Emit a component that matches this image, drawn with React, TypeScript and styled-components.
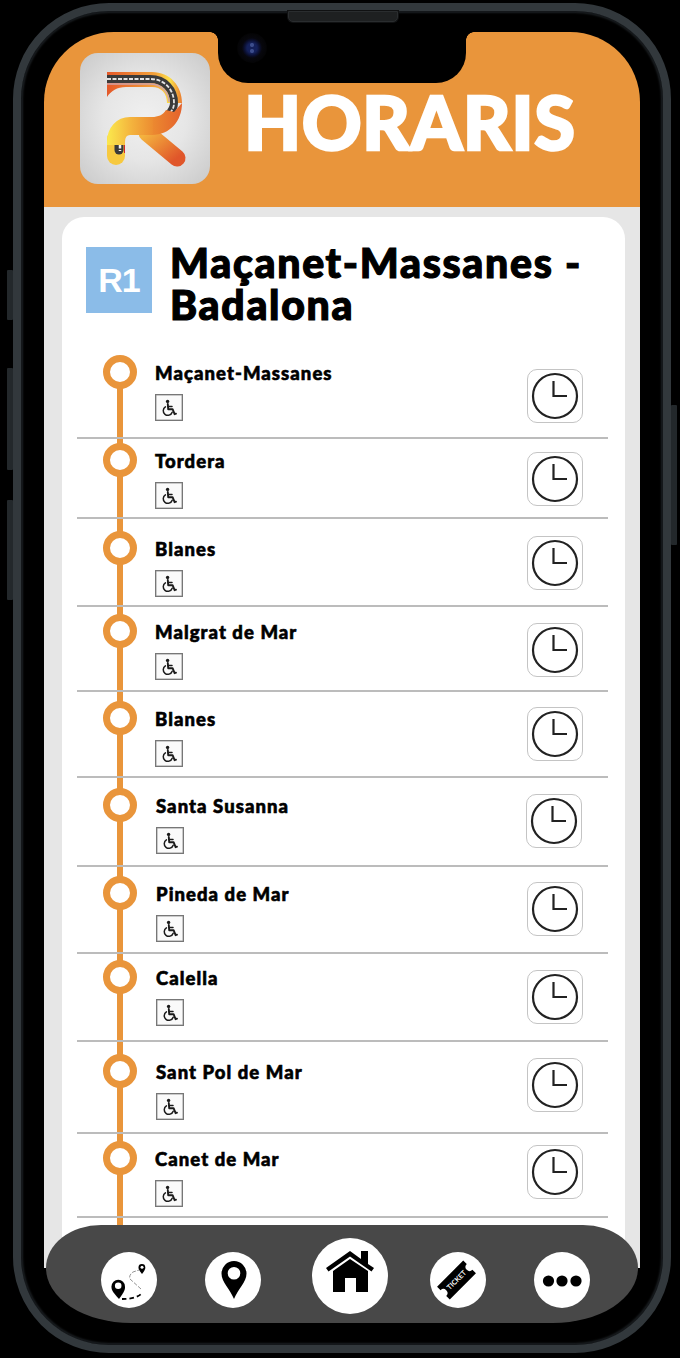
import styled, { createGlobalStyle } from 'styled-components'

const ORANGE = '#e9953b'

const GlobalStyle = createGlobalStyle`
  html, body {
    margin: 0;
    padding: 0;
    background: #000;
  }
  * {
    box-sizing: border-box;
  }
`

const Page = styled.div`
  width: 680px;
  height: 1358px;
  padding: 3px 9px 5px 13px;
  background: #000;
  font-family: Lato, 'Liberation Sans', sans-serif;
  overflow: hidden;
`

const Bezel = styled.div`
  position: relative;
  width: 658px;
  height: 1350px;
  padding: 21px 23px;
  border: 8px solid #32383c;
  border-radius: 96px;
  box-shadow: inset 0 0 0 1px #14171a, inset 0 0 2px 2px #1b1f22;
`

const SideButton = styled.div<{ $top: number; $height: number; $right?: boolean }>`
  position: absolute;
  top: ${({ $top }) => $top}px;
  ${({ $right }) => ($right ? 'right: -14px;' : 'left: -14px;')}
  width: 6px;
  height: ${({ $height }) => $height}px;
  background: #23282b;
  border-radius: 1px;
`

const Speaker = styled.div`
  position: absolute;
  top: 0;
  left: 267px;
  width: 110px;
  height: 11px;
  background: #1e2021;
  border: 1px solid #2a2d2f;
  border-radius: 0 0 5px 5px;
  box-shadow: 0 0 0 1px #101112;
`

const Screen = styled.div`
  position: relative;
  display: flex;
  flex-direction: column;
  width: 596px;
  height: 1236px;
`

const Notch = styled.div`
  position: absolute;
  top: 0;
  left: 174px;
  width: 248px;
  height: 51px;
  background: #000;
  border-radius: 0 0 30px 30px;
  z-index: 2;
  &::before,
  &::after {
    content: '';
    position: absolute;
    top: 0;
    width: 8px;
    height: 8px;
  }
  &::before {
    left: -8px;
    background: radial-gradient(circle at 0 100%, transparent 7.5px, #000 8px);
  }
  &::after {
    right: -8px;
    background: radial-gradient(circle at 100% 100%, transparent 7.5px, #000 8px);
  }
`

const Camera = styled.div`
  position: absolute;
  top: 1px;
  left: 19px;
  width: 30px;
  height: 30px;
  border-radius: 50%;
  background:
    radial-gradient(circle at 50% 40%, #3c4d8c 0 1.5px, transparent 2.5px),
    radial-gradient(circle at 50% 60%, #3c4d8c 0 1.5px, transparent 2.5px),
    radial-gradient(circle, #14205a 0 5px, #0a0e2c 8px, #07070d 10px, #040405 15px);
`

const Header = styled.header`
  display: flex;
  flex: 0 0 175px;
  align-items: flex-start;
  gap: 34px;
  padding: 21px 0 0 36px;
  background: ${ORANGE};
  border-radius: 70px 70px 0 0;
`

const LogoTile = styled.div`
  width: 130px;
  height: 131px;
  border-radius: 18px;
  background: radial-gradient(circle at 50% 50%, #f0f0f0 0%, #e6e6e6 45%, #c9c9c9 100%);
`

const AppTitle = styled.h1`
  margin: 31px 0 0;
  color: #fff;
  font-size: 74px;
  font-weight: 900;
  line-height: 75px;
  letter-spacing: 0.4px;
  -webkit-text-stroke: 2.4px #fff;
`

const Content = styled.main`
  display: flex;
  flex: 1;
  min-height: 0;
  padding: 10px 15px 0 18px;
  background: #e6e6e6;
  overflow: hidden;
`

const Card = styled.section`
  flex: 1;
  padding: 30px 17px 0 15px;
  background: #fff;
  border-radius: 22px 22px 0 0;
`

const LineHeading = styled.div`
  display: flex;
  align-items: flex-start;
  gap: 18px;
  height: 103px;
  padding-left: 9px;
`

const LineBadge = styled.div`
  display: flex;
  flex: 0 0 66px;
  align-items: center;
  justify-content: center;
  height: 66px;
  background: #8bbce8;
  color: #fff;
  font-family: 'Liberation Sans', Arial, sans-serif;
  font-size: 34px;
  font-weight: 700;
  letter-spacing: -1px;
`

const LineName = styled.h2`
  margin: -5px 0 0;
  color: #000;
  font-size: 41px;
  font-weight: 900;
  line-height: 42px;
  letter-spacing: 1.7px;
  -webkit-text-stroke: 1.2px #000;
`

const StopList = styled.div`
  position: relative;
`

const Rail = styled.div`
  position: absolute;
  top: 22px;
  bottom: 0;
  left: 39.5px;
  width: 6px;
  background: ${ORANGE};
`

const StopRow = styled.div<{ $height: number }>`
  position: relative;
  display: flex;
  align-items: flex-start;
  height: ${({ $height }) => $height}px;
  padding: 0 25px 0 26px;
  border-bottom: 2px solid #bcbcbc;
`

const StopMarker = styled.div<{ $top: number }>`
  flex: 0 0 34px;
  height: 34px;
  margin-top: ${({ $top }) => $top}px;
  background: #fff;
  border: 7px solid ${ORANGE};
  border-radius: 50%;
`

const StopInfo = styled.div<{ $top: number; $nudge: number }>`
  flex: 1;
  margin: ${({ $top }) => $top + 8}px 0 0 ${({ $nudge }) => 18 + $nudge}px;
`

const StopName = styled.div`
  color: #000;
  font-size: 18.5px;
  font-weight: 900;
  line-height: 20px;
  letter-spacing: 1.05px;
  -webkit-text-stroke: 0.6px #000;
`

const AccessBadge = styled.div`
  display: flex;
  align-items: center;
  justify-content: center;
  width: 28px;
  height: 27px;
  margin-top: 11px;
  background: #fafafa;
  border: 1px solid #777;
  box-shadow: inset 0 0 0 0.5px #999;
`

const ClockButton = styled.div<{ $top: number; $nudge: number }>`
  display: flex;
  flex: 0 0 56px;
  align-items: center;
  justify-content: center;
  height: 54px;
  margin: ${({ $top }) => $top}px ${({ $nudge }) => $nudge}px 0 0;
  background: #fff;
  border: 1px solid #c4c4c4;
  border-radius: 10px;
`

const BottomNav = styled.nav`
  position: absolute;
  right: 2px;
  bottom: -55px;
  left: 2px;
  display: flex;
  align-items: center;
  gap: 48px;
  height: 98px;
  padding: 12px 0 0 55px;
  background: #484848;
  border-radius: 55px 55px 85px 85px / 43px 43px 55px 55px;
`

const NavButton = styled.div<{ $big?: boolean }>`
  display: flex;
  align-items: center;
  justify-content: center;
  flex: 0 0 auto;
  width: ${({ $big }) => ($big ? 76 : 56)}px;
  height: ${({ $big }) => ($big ? 76 : 56)}px;
  margin: ${({ $big }) => ($big ? '-8px -6px 0 3px' : '0')};
  background: #fff;
  border-radius: 50%;
`

const RLogo = () => (
  <svg width="130" height="131" viewBox="0 0 130 131" fill="none">
    <defs>
      <linearGradient id="legGrad" x1="0" y1="0" x2="1" y2="1">
        <stop offset="0" stopColor="#f4b23e" />
        <stop offset="1" stopColor="#e0562a" />
      </linearGradient>
      <linearGradient id="bandGrad" x1="27" y1="0" x2="74" y2="0" gradientUnits="userSpaceOnUse">
        <stop offset="0" stopColor="#fbe94d" />
        <stop offset="0.5" stopColor="#f4b53e" />
        <stop offset="1" stopColor="#ec8a30" />
      </linearGradient>
      <linearGradient id="topGrad" x1="27" y1="0" x2="102" y2="0" gradientUnits="userSpaceOnUse">
        <stop offset="0" stopColor="#e4592a" />
        <stop offset="0.65" stopColor="#f3a33a" />
        <stop offset="0.84" stopColor="#fbe04a" />
        <stop offset="1" stopColor="#ea7a2e" />
      </linearGradient>
      <linearGradient id="bowlGrad" x1="72" y1="0" x2="102" y2="0" gradientUnits="userSpaceOnUse">
        <stop offset="0" stopColor="#ec8a30" />
        <stop offset="1" stopColor="#e4622c" />
      </linearGradient>
    </defs>
    <path d="M67 80 L97 105" stroke="url(#legGrad)" strokeWidth="17" strokeLinecap="round" />
    <path d="M36 86 V103" stroke="#f7c93f" strokeWidth="18" strokeLinecap="round" />
    <path d="M39 80 V97" stroke="#3a3a3a" strokeWidth="9" strokeLinecap="round" />
    <path d="M40 82 V98" stroke="#f4f4f4" strokeWidth="2.5" strokeDasharray="6 1.5" />
    <path d="M44.5 84 V100" stroke="#d8262a" strokeWidth="1" />
    <path d="M27 44 V19 H72 C90 19 102 33 102 50 H87 C87 40 81 34 72 34 H46 C37 34 31 38 27 44 Z" fill="url(#topGrad)" />
    <path d="M27 26 H70 C85 26 94 37 94 50 C94 55 92 58 88 62" stroke="#3a3a3a" strokeWidth="8" />
    <path d="M27 26 H70 C85 26 94 37 94 50 C94 55 92 58 88 62" stroke="#e4e4e4" strokeWidth="1.8" strokeDasharray="4 1.5" />
    <path d="M27 31 H70 C81 31 89 39 89 49" stroke="#cfa3a8" strokeWidth="1.5" />
    <path d="M72 64 C78 64 83 62 86 57 L94 59 L102 50 C102 68 90 82 72 82 Z" fill="url(#bowlGrad)" />
    <path d="M36 92 V89 C36 79 42 73 50 73 H73" stroke="url(#bandGrad)" strokeWidth="18" />
  </svg>
)

const WheelchairIcon = () => (
  <svg width="18" height="18" viewBox="0 0 18 18" fill="none" stroke="#1a1a1a" strokeLinecap="round" strokeLinejoin="round">
    <circle cx="7.6" cy="2.4" r="1.7" fill="#1a1a1a" stroke="none" />
    <path d="M7.8 5 L8.2 10.2 H12.6 L14.6 15.2 L16 14.7" strokeWidth="1.9" />
    <path d="M8 7.4 H12" strokeWidth="1.5" />
    <path d="M5.4 7.8 A4.6 4.6 0 1 0 12.2 13.2" strokeWidth="1.5" />
  </svg>
)

const ClockIcon = () => (
  <svg width="48" height="48" viewBox="0 0 48 48" fill="none" stroke="#222">
    <circle cx="24" cy="24" r="22" strokeWidth="2.2" />
    <path d="M22.5 9 V24 H36" strokeWidth="2.2" />
  </svg>
)

const RouteIcon = () => (
  <svg width="56" height="56" viewBox="0 0 56 56">
    <path d="M18 47 C10.5 39 10.5 37 10.5 34.5 A6.7 6.7 0 0 1 24 34.5 C24 37 24 39 18 47 Z" fill="#000" />
    <circle cx="17.2" cy="33.8" r="3.3" fill="#fff" />
    <path d="M41 22 C38 18 37.5 17 37.5 15.5 A3.4 3.4 0 0 1 44.3 15.5 C44.3 17 44 18 41 22 Z" fill="#000" />
    <circle cx="41" cy="15.2" r="1.5" fill="#fff" />
    <path d="M21 47 C28 47 37 46 41 41" fill="none" stroke="#000" strokeWidth="1.8" strokeDasharray="4.5 3" />
    <path d="M40 37 L29 27 C28 25 29 22 32 20 L38 18" fill="none" stroke="#777" strokeWidth="0.8" strokeDasharray="4 1.5" />
  </svg>
)

const PinIcon = () => (
  <svg width="56" height="56" viewBox="0 0 56 56">
    <path fillRule="evenodd" d="M29 47 C25 37 16.5 30 16.5 21.5 A12.5 12.5 0 0 1 41.5 21.5 C41.5 30 33 37 29 47 Z M29 15 A6.3 6.3 0 1 0 29 27.6 A6.3 6.3 0 1 0 29 15 Z" fill="#000" />
  </svg>
)

const HomeIcon = () => (
  <svg width="76" height="76" viewBox="0 0 76 76" fill="#000">
    <path d="M14 30 L38 13 L49 21 V13 H56 V26 L62 30 L59.5 33.5 L38 18.5 L16.5 33.5 Z" />
    <path d="M21 54 V33 L38 21 L56 33 V54 H44 V40 H33 V54 Z" />
  </svg>
)

const TicketIcon = () => (
  <svg width="56" height="56" viewBox="0 0 56 56">
    <g transform="rotate(-45 26.5 28)">
      <path d="M8 19 H45 V24 A4 4 0 0 0 45 32 V37 H8 V32 A4 4 0 0 0 8 24 Z" fill="#000" />
      <text x="26.5" y="30.5" fill="#fff" fontFamily="Lato, sans-serif" fontSize="7" fontWeight="700" textAnchor="middle">TICKET</text>
    </g>
  </svg>
)

const MoreIcon = () => (
  <svg width="56" height="56" viewBox="0 0 56 56" fill="#000">
    <circle cx="14.5" cy="29" r="5.6" />
    <circle cx="28" cy="29" r="5.6" />
    <circle cx="42" cy="29" r="5.6" />
  </svg>
)

const stops = [
  { name: 'Maçanet-Massanes', height: 89, top: 5, clockTop: 19, nudge: 0, clockNudge: 0 },
  { name: 'Tordera', height: 80, top: 4, clockTop: 13, nudge: 0, clockNudge: 0 },
  { name: 'Blanes', height: 88, top: 12, clockTop: 17, nudge: 0, clockNudge: 0 },
  { name: 'Malgrat de Mar', height: 85, top: 7, clockTop: 16, nudge: 0, clockNudge: 0 },
  { name: 'Blanes', height: 86, top: 9, clockTop: 15, nudge: 0, clockNudge: 0 },
  { name: 'Santa Susanna', height: 89, top: 10, clockTop: 16, nudge: 1, clockNudge: 1 },
  { name: 'Pineda de Mar', height: 87, top: 9, clockTop: 15, nudge: 1, clockNudge: 0 },
  { name: 'Calella', height: 88, top: 6, clockTop: 16, nudge: 1, clockNudge: 0 },
  { name: 'Sant Pol de Mar', height: 92, top: 12, clockTop: 16, nudge: 1, clockNudge: 0 },
  { name: 'Canet de Mar', height: 84, top: 7, clockTop: 11, nudge: 0, clockNudge: 0 },
  { name: 'Arenys de Mar', height: 86, top: 9, clockTop: 16, nudge: 0, clockNudge: 0 },
]

const App = () => (
  <Page>
    <GlobalStyle />
    <Bezel>
      <SideButton $top={259} $height={50} />
      <SideButton $top={357} $height={102} />
      <SideButton $top={489} $height={100} />
      <SideButton $right $top={394} $height={140} />
      <Speaker />
      <Screen>
        <Notch>
          <Camera />
        </Notch>
        <Header>
          <LogoTile>
            <RLogo />
          </LogoTile>
          <AppTitle>HORARIS</AppTitle>
        </Header>
        <Content>
          <Card>
            <LineHeading>
              <LineBadge>R1</LineBadge>
              <LineName>Maçanet-Massanes - Badalona</LineName>
            </LineHeading>
            <StopList>
              <Rail />
              {stops.map((stop, index) => (
                <StopRow key={`${stop.name}-${index}`} $height={stop.height}>
                  <StopMarker $top={stop.top} />
                  <StopInfo $top={stop.top} $nudge={stop.nudge}>
                    <StopName>{stop.name}</StopName>
                    <AccessBadge>
                      <WheelchairIcon />
                    </AccessBadge>
                  </StopInfo>
                  <ClockButton $top={stop.clockTop} $nudge={stop.clockNudge}>
                    <ClockIcon />
                  </ClockButton>
                </StopRow>
              ))}
            </StopList>
          </Card>
        </Content>
        <BottomNav>
          <NavButton><RouteIcon /></NavButton>
          <NavButton><PinIcon /></NavButton>
          <NavButton $big><HomeIcon /></NavButton>
          <NavButton><TicketIcon /></NavButton>
          <NavButton><MoreIcon /></NavButton>
        </BottomNav>
      </Screen>
    </Bezel>
  </Page>
)

export default App
